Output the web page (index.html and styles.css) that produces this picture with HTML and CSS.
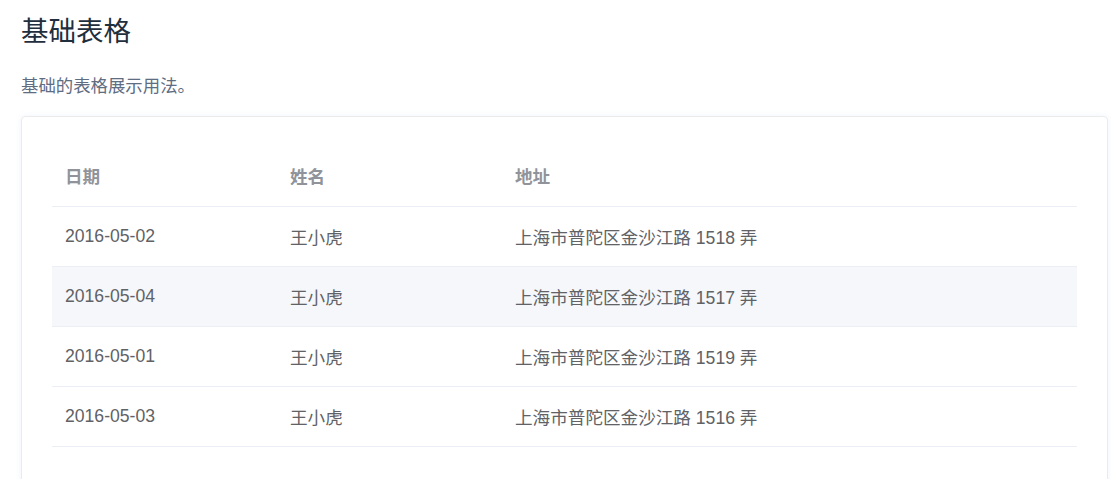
FILE: index.html
```html
<!DOCTYPE html>
<html lang="zh-CN">
<head>
    <meta charset="UTF-8">
    <meta name="viewport" content="width=device-width, initial-scale=1.0">
    <title>基础表格</title>
    <link rel="stylesheet" href="styles.css">
</head>
<body>
    <div class="page">
        <h3 class="title">基础表格</h3>
        <p class="desc">基础的表格展示用法。</p>
        <div class="demo-block">
            <table class="table">
                <thead>
                    <tr>
                        <th class="col-date">日期</th>
                        <th class="col-name">姓名</th>
                        <th>地址</th>
                    </tr>
                </thead>
                <tbody>
                    <tr>
                        <td>2016-05-02</td>
                        <td>王小虎</td>
                        <td>上海市普陀区金沙江路 1518 弄</td>
                    </tr>
                    <tr class="hover">
                        <td>2016-05-04</td>
                        <td>王小虎</td>
                        <td>上海市普陀区金沙江路 1517 弄</td>
                    </tr>
                    <tr>
                        <td>2016-05-01</td>
                        <td>王小虎</td>
                        <td>上海市普陀区金沙江路 1519 弄</td>
                    </tr>
                    <tr>
                        <td>2016-05-03</td>
                        <td>王小虎</td>
                        <td>上海市普陀区金沙江路 1516 弄</td>
                    </tr>
                </tbody>
            </table>
        </div>
    </div>
</body>
</html>
```

FILE: styles.css
```css
body {
    margin: 0;
    font-family: "Liberation Sans", Arial, "Noto Sans CJK SC", sans-serif;
    background-color: #fff;
    color: #606266;
}
.page {
    padding: 12px 0 0 21px;
}
.title {
    margin: 0;
    font-size: 27.5px;
    font-weight: 400;
    line-height: 40px;
    color: #1f2f3d;
}
.desc {
    margin: 21px 0 0;
    font-size: 17.4px;
    line-height: 27px;
    color: #5e6d82;
}
.demo-block {
    width: 1025px;
    margin-top: 16px;
    padding: 30px 30px 60px;
    border: 1px solid #ebebeb;
    border-radius: 4px;
    box-shadow: 0 0 6px rgba(232, 237, 250, 0.6);
}
.table {
    width: 100%;
    border-collapse: collapse;
    font-size: 17.6px;
}
.table th, .table td {
    height: 59px;
    padding: 0 13px;
    text-align: left;
    border-bottom: 1px solid #ebeef5;
}
.table th {
    height: 56px;
    padding-bottom: 3px;
    color: #909399;
    font-weight: 700;
}
.table td {
    padding-bottom: 1px;
    height: 58px;
    color: #606266;
}
.col-date, .col-name {
    width: 199px;
}
.table tr.hover td {
    background-color: #f5f7fa;
}
```
